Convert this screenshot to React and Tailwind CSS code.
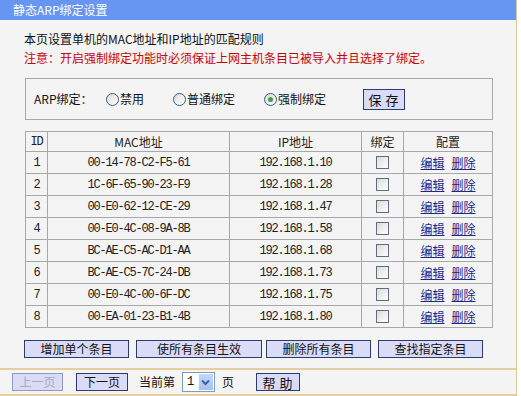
import React from "react";

const rows = [
  { id: 1, mac: "00-14-78-C2-F5-61", ip: "192.168.1.10" },
  { id: 2, mac: "1C-6F-65-90-23-F9", ip: "192.168.1.28" },
  { id: 3, mac: "00-E0-62-12-CE-29", ip: "192.168.1.47" },
  { id: 4, mac: "00-E0-4C-08-9A-8B", ip: "192.168.1.58" },
  { id: 5, mac: "BC-AE-C5-AC-D1-AA", ip: "192.168.1.68" },
  { id: 6, mac: "BC-AE-C5-7C-24-DB", ip: "192.168.1.73" },
  { id: 7, mac: "00-E0-4C-00-6F-DC", ip: "192.168.1.75" },
  { id: 8, mac: "00-EA-01-23-B1-4B", ip: "192.168.1.80" },
];

const cjk = "font-['Noto_Sans_CJK_SC',sans-serif]";
const mono = "font-['Liberation_Mono','Noto_Sans_CJK_SC',monospace] tracking-[-1.2px]";

// radio button, checked one gets the green dot
function Radio({ checked }) {
  return (
    <span className="inline-flex w-[13px] h-[13px] rounded-full border border-[#2f5e88] bg-gradient-to-br from-[#dcdcd6] to-white items-center justify-center">
      {checked && <span className="w-[5px] h-[5px] rounded-full bg-[#3ea33e]" />}
    </span>
  );
}

function Btn({ children, className = "", disabled }) {
  return (
    <div
      className={
        "flex items-center justify-center bg-[#d9dbf7] border " +
        (disabled ? "border-[#8a9cc0] text-[#a8a8c0]" : "border-[#2a3d6e] text-[#111]") +
        " " +
        className
      }
    >
      {children}
    </div>
  );
}

const App = () => {
  return (
    <div className={"w-[521px] h-[396px] bg-white flex text-[12px] leading-none " + cjk}>
      <div className="w-[517px] h-full bg-[#f4f4f4] border-r border-[#d9c79c] flex flex-col">
        <div className="h-[20px] bg-[#6795f2] text-white pl-[13px] flex items-center">
          静态ARP绑定设置
        </div>

        <div className="pl-[24px] mt-[9px] text-[#111]">
          <div className="h-[19px] flex items-center">本页设置单机的MAC地址和IP地址的匹配规则</div>
          <div className="h-[19px] flex items-center text-[#c80000]">
            注意：开启强制绑定功能时必须保证上网主机条目已被导入并且选择了绑定。
          </div>
        </div>

        <div className="ml-[25px] mt-[11px] w-[468px] h-[42px] border border-[#a8a8a8] flex items-center text-[#111]">
          <span className="ml-[8px] w-[72px]">ARP绑定：</span>
          <span className="flex items-center gap-[1px]">
            <Radio />
            <span>禁用</span>
          </span>
          <span className="flex items-center gap-[1px] ml-[29px]">
            <Radio />
            <span>普通绑定</span>
          </span>
          <span className="flex items-center gap-[1px] ml-[29px]">
            <Radio checked />
            <span>强制绑定</span>
          </span>
          <Btn className="ml-[37px] w-[42px] h-[21px] text-[13px] tracking-[4px] pl-[3px]">保存</Btn>
        </div>

        <table className="ml-[25px] mt-[11px] w-[468px] border-collapse text-[#222] table-fixed">
          <thead>
            <tr className="h-[20px]">
              <th className={"w-[22px] border border-[#a8a8a8] font-normal " + mono}>ID</th>
              <th className="w-[182px] border border-[#a8a8a8] font-normal">MAC地址</th>
              <th className="w-[132px] border border-[#a8a8a8] font-normal">IP地址</th>
              <th className="w-[42px] border border-[#a8a8a8] font-normal">绑定</th>
              <th className="border border-[#a8a8a8] font-normal">配置</th>
            </tr>
          </thead>
          <tbody>
            {rows.map((r) => (
              <tr key={r.id} className="h-[22px]">
                <td className={"border border-[#a8a8a8] text-center " + mono}>{r.id}</td>
                <td className={"border border-[#a8a8a8] text-center " + mono}>{r.mac}</td>
                <td className={"border border-[#a8a8a8] text-center " + mono}>{r.ip}</td>
                <td className="border border-[#a8a8a8]">
                  <div className="mx-auto w-[13px] h-[13px] border border-[#5a6f86] bg-gradient-to-br from-[#dcdcd6] to-white" />
                </td>
                <td className="border border-[#a8a8a8] text-center">
                  <span className="underline text-[#1b2a8a]">编辑</span>
                  <span className="underline text-[#1b2a8a] ml-[7px]">删除</span>
                </td>
              </tr>
            ))}
          </tbody>
        </table>

        <div className="flex mt-[12px] h-[18px]">
          <Btn className="ml-[24px] w-[105px]">增加单个条目</Btn>
          <Btn className="ml-[7px] w-[126px]">使所有条目生效</Btn>
          <Btn className="ml-[4px] w-[105px]">删除所有条目</Btn>
          <Btn className="ml-[7px] w-[105px]">查找指定条目</Btn>
        </div>

        <div className="mt-[10px] h-[2px] bg-[#e6cf9e]" />

        <div className="flex items-center h-[24px] text-[#111]">
          <Btn disabled className="ml-[12px] w-[51px] h-[18px]">上一页</Btn>
          <Btn className="ml-[13px] w-[52px] h-[18px]">下一页</Btn>
          <span className="ml-[11px]">当前第</span>
          <div className="ml-[7px] w-[33px] h-[20px] bg-white border border-[#7f9db9] flex items-center">
            <span className={"ml-[4px] w-[12px] " + mono + " tracking-normal"}>1</span>
            <div className="ml-auto mr-[1px] w-[15px] h-[16px] bg-gradient-to-b from-[#c6d6fa] to-[#a9c0f1] flex items-center justify-center">
              <svg width="9" height="7" viewBox="0 0 9 7">
                <path d="M1 1.5 L4.5 5 L8 1.5" fill="none" stroke="#3d5fa8" strokeWidth="2" />
              </svg>
            </div>
          </div>
          <span className="ml-[7px]">页</span>
          <Btn className="ml-[22px] w-[44px] h-[18px] text-[13px] tracking-[4px] pl-[3px]">帮助</Btn>
        </div>

        <div className="h-[2px] bg-[#e6cf9e]" />
      </div>
    </div>
  );
};

export default App;
